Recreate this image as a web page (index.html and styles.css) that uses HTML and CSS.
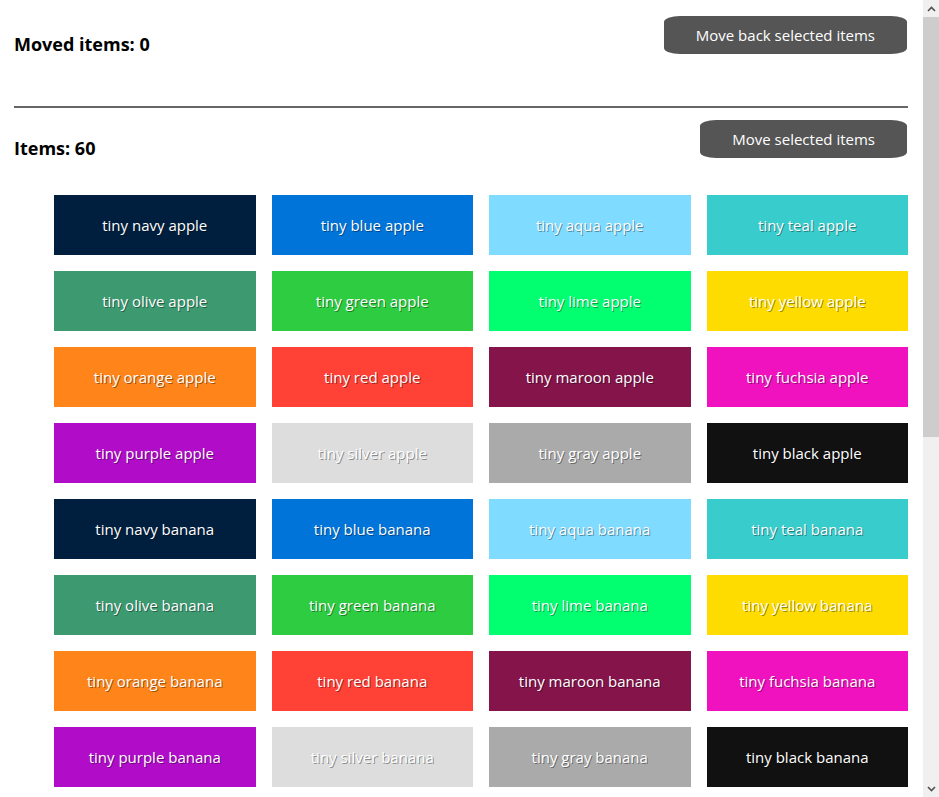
FILE: index.html
```html
<!DOCTYPE html>
<html>
<head>
<meta charset="utf-8">
<link rel="stylesheet" href="styles.css">
</head>
<body>
<main class="page">
  <section class="panel">
    <div class="panel-head">
      <h2 class="title">Moved items: 0</h2>
      <button class="btn">Move back selected items</button>
    </div>
    <ul class="grid moved"></ul>
  </section>
  <hr class="divider">
  <section class="panel">
    <div class="panel-head">
      <h2 class="title">Items: 60</h2>
      <button class="btn">Move selected items</button>
    </div>
    <ul class="grid items">
      <li class="tile navy">tiny navy apple</li>
      <li class="tile blue">tiny blue apple</li>
      <li class="tile aqua">tiny aqua apple</li>
      <li class="tile teal">tiny teal apple</li>
      <li class="tile olive">tiny olive apple</li>
      <li class="tile green">tiny green apple</li>
      <li class="tile lime">tiny lime apple</li>
      <li class="tile yellow">tiny yellow apple</li>
      <li class="tile orange">tiny orange apple</li>
      <li class="tile red">tiny red apple</li>
      <li class="tile maroon">tiny maroon apple</li>
      <li class="tile fuchsia">tiny fuchsia apple</li>
      <li class="tile purple">tiny purple apple</li>
      <li class="tile silver">tiny silver apple</li>
      <li class="tile gray">tiny gray apple</li>
      <li class="tile black">tiny black apple</li>
      <li class="tile navy">tiny navy banana</li>
      <li class="tile blue">tiny blue banana</li>
      <li class="tile aqua">tiny aqua banana</li>
      <li class="tile teal">tiny teal banana</li>
      <li class="tile olive">tiny olive banana</li>
      <li class="tile green">tiny green banana</li>
      <li class="tile lime">tiny lime banana</li>
      <li class="tile yellow">tiny yellow banana</li>
      <li class="tile orange">tiny orange banana</li>
      <li class="tile red">tiny red banana</li>
      <li class="tile maroon">tiny maroon banana</li>
      <li class="tile fuchsia">tiny fuchsia banana</li>
      <li class="tile purple">tiny purple banana</li>
      <li class="tile silver">tiny silver banana</li>
      <li class="tile gray">tiny gray banana</li>
      <li class="tile black">tiny black banana</li>
    </ul>
  </section>
</main>
<div class="scrollbar" aria-hidden="true">
  <div class="sb-arrow sb-up"><svg width="9" height="6" viewBox="0 0 9 6"><path d="M1 5 L4.5 1.5 L8 5" fill="none" stroke="#505050" stroke-width="1.6"/></svg></div>
  <div class="sb-thumb"></div>
  <div class="sb-track"></div>
  <div class="sb-arrow sb-down"><svg width="9" height="6" viewBox="0 0 9 6"><path d="M1 1 L4.5 4.5 L8 1" fill="none" stroke="#505050" stroke-width="1.6"/></svg></div>
</div>
</body>
</html>
```
FILE: styles.css
```css
html, body {
  margin: 0;
  padding: 0;
  background: #fff;
  overflow: hidden;
}
body {
  height: 797px;
  display: flex;
  font-family: "Open Sans", "Noto Sans", sans-serif;
  color: #000;
}
.page {
  flex: 1;
  padding: 16px 15px 0 14px;
}
.panel-head {
  display: flex;
  justify-content: space-between;
  align-items: flex-start;
}
.title {
  margin: 16px 0 0 0;
  font-size: 18px;
  line-height: 24px;
  font-weight: 700;
}
.btn {
  height: 38px;
  margin-right: 1px;
  border: none;
  border-radius: 16px / 6px;
  background: #555555;
  color: #fff;
  font-family: "Open Sans", "Noto Sans", sans-serif;
  font-size: 15px;
  padding: 0 32px;
}
.grid {
  list-style: none;
  margin: 0;
  padding: 0 0 0 40px;
  display: grid;
  grid-template-columns: repeat(4, 1fr);
  gap: 16px;
}
.divider {
  margin: 50px 0 12px 0;
  border: none;
  border-top: 2px solid #666;
  height: 0;
}
.items {
  margin-top: 35px;
}
.tile {
  height: 60px;
  display: flex;
  align-items: center;
  justify-content: center;
  padding-bottom: 1px;
  box-sizing: border-box;
  color: #fff;
  font-size: 15px;
  text-shadow: 1px 1px 0 rgba(0, 0, 0, 0.4);
}
.navy { background: #001f3f; }
.blue { background: #0074d9; }
.aqua { background: #7fdbff; }
.teal { background: #39cccc; }
.olive { background: #3d9970; }
.green { background: #2ecc40; }
.lime { background: #01ff70; }
.yellow { background: #ffdc00; }
.orange { background: #ff851b; }
.red { background: #ff4136; }
.maroon { background: #85144b; }
.fuchsia { background: #f012be; }
.purple { background: #b10dc9; }
.silver { background: #dddddd; }
.gray { background: #aaaaaa; }
.black { background: #111111; }

.scrollbar {
  width: 16px;
  height: 797px;
  flex: none;
  display: flex;
  flex-direction: column;
  background: #f0f0f0;
}
.sb-arrow {
  height: 17px;
  flex: none;
  display: flex;
  align-items: center;
  justify-content: center;
}
.sb-thumb {
  height: 420px;
  flex: none;
  background: #cdcdcd;
}
.sb-track {
  flex: 1;
}
```
